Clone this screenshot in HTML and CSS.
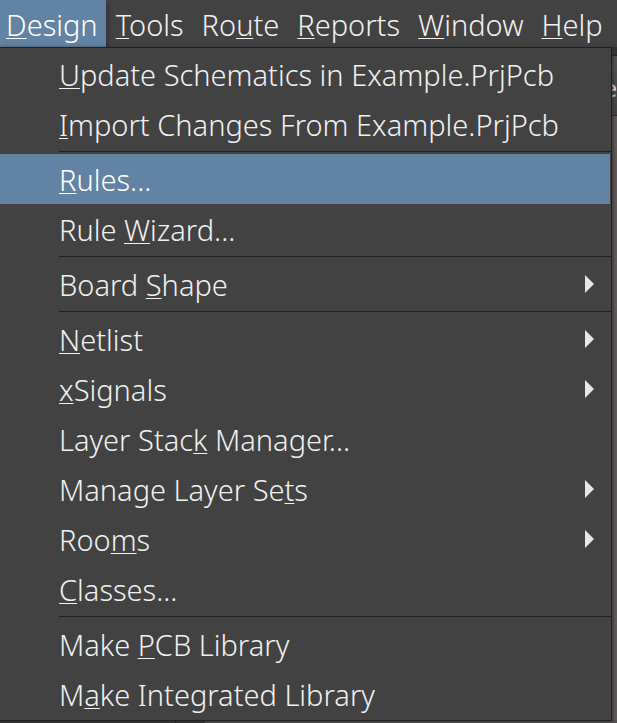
FILE: index.html
```html
<!DOCTYPE html>
<html lang="en">
<head>
<meta charset="utf-8">
<title>Design menu</title>
<link rel="stylesheet" href="styles.css">
</head>
<body>
<nav class="menubar" aria-label="Main menu">
  <button class="tab active" type="button"><u>D</u>esign</button>
  <button class="tab" type="button"><u>T</u>ools</button>
  <button class="tab" type="button">Ro<u>u</u>te</button>
  <button class="tab" type="button"><u>R</u>eports</button>
  <button class="tab" type="button"><u>W</u>indow</button>
  <button class="tab" type="button"><u>H</u>elp</button>
</nav>
<main class="workspace">
  <div class="band"></div>
  <div class="toolbar">e</div>
  <div class="canvas"></div>
  <div class="status"><span class="panel"></span><span class="notch"></span></div>
  <div class="menu" role="menu">
    <button class="item" type="button" role="menuitem"><span><u>U</u>pdate Schematics in Example.PrjPcb</span></button>
    <button class="item" type="button" role="menuitem"><span><u>I</u>mport Changes From Example.PrjPcb</span></button>
    <hr class="rule">
    <button class="item selected" type="button" role="menuitem"><span><u>R</u>ules...</span></button>
    <button class="item" type="button" role="menuitem"><span>Rule <u>W</u>izard...</span></button>
    <hr class="rule">
    <button class="item" type="button" role="menuitem"><span>Board <u>S</u>hape</span><svg class="arrow" viewBox="0 0 9 18"><path d="M0 0L9 9L0 18Z"/></svg></button>
    <hr class="rule">
    <button class="item" type="button" role="menuitem"><span><u>N</u>etlist</span><svg class="arrow" viewBox="0 0 9 18"><path d="M0 0L9 9L0 18Z"/></svg></button>
    <button class="item" type="button" role="menuitem"><span><u>x</u>Signals</span><svg class="arrow" viewBox="0 0 9 18"><path d="M0 0L9 9L0 18Z"/></svg></button>
    <button class="item" type="button" role="menuitem"><span>Layer Stac<u>k</u> Manager...</span></button>
    <button class="item" type="button" role="menuitem"><span>Manage Layer Se<u>t</u>s</span><svg class="arrow" viewBox="0 0 9 18"><path d="M0 0L9 9L0 18Z"/></svg></button>
    <button class="item" type="button" role="menuitem"><span>Roo<u>m</u>s</span><svg class="arrow" viewBox="0 0 9 18"><path d="M0 0L9 9L0 18Z"/></svg></button>
    <button class="item" type="button" role="menuitem"><span><u>C</u>lasses...</span></button>
    <hr class="rule">
    <button class="item" type="button" role="menuitem"><span>Make <u>P</u>CB Library</span></button>
    <button class="item" type="button" role="menuitem"><span>M<u>a</u>ke Integrated Library</span></button>
  </div>
</main>
</body>
</html>
```
FILE: styles.css
```css
* {
  box-sizing: border-box;
}

body {
  margin: 0;
  min-height: 100vh;
  display: flex;
  flex-direction: column;
  overflow: hidden;
  background: #424242;
  color: #f0f0f0;
  font-family: "Noto Sans", "Open Sans", sans-serif;
  font-size: 29px;
  font-weight: 300;
  line-height: 40px;
}

button {
  border: 0;
  background: none;
  color: inherit;
  font: inherit;
  text-align: left;
  white-space: nowrap;
}

u {
  text-decoration-thickness: 1px;
  text-underline-offset: 2px;
}

.menubar {
  display: flex;
  height: 47px;
  gap: 2px;
}

.tab {
  padding: 5px 8px 2px;
}

.tab.active {
  background: #6283a3;
  color: #fff;
  padding-left: 6px;
  box-shadow: 2px 4px 4px #333;
}

.workspace {
  position: relative;
  flex: 1;
  display: flex;
  flex-direction: column;
}

.band {
  height: 9px;
  background: #333;
  border-bottom: 1px solid #202020;
}

.toolbar {
  height: 60px;
  padding-top: 12px;
  overflow: hidden;
  text-align: right;
  font-size: 24px;
  font-weight: 400;
  background: linear-gradient(#555, #444);
  border-bottom: 1px solid #282828;
}

.canvas {
  flex: 1;
  background: #605b5b;
}

.status {
  display: flex;
  height: 3px;
  background: #555253;
}

.panel {
  width: 176px;
  background: #302d2d;
  border-right: 1px solid #161616;
}

.notch {
  width: 29px;
  background: #292929;
}

.menu {
  position: absolute;
  top: 0;
  left: 0;
  right: 5px;
  padding: 1px 0;
  background: #424242;
  border: 1px solid #202020;
  border-left: 0;
  box-shadow: 1px 1px 4px #353333;
}

.item {
  display: flex;
  align-items: center;
  justify-content: space-between;
  width: calc(100% - 1px);
  height: 50px;
  padding: 2px 16px 0 59px;
}

.item.selected {
  background: #6283a3;
  color: #fff;
}

.rule {
  height: 1px;
  margin: 2px 0 2px 59px;
  border: 0;
  background: #202020;
}

.arrow {
  width: 9px;
  height: 18px;
  margin-bottom: 2px;
  fill: #e6e6e6;
}
```
